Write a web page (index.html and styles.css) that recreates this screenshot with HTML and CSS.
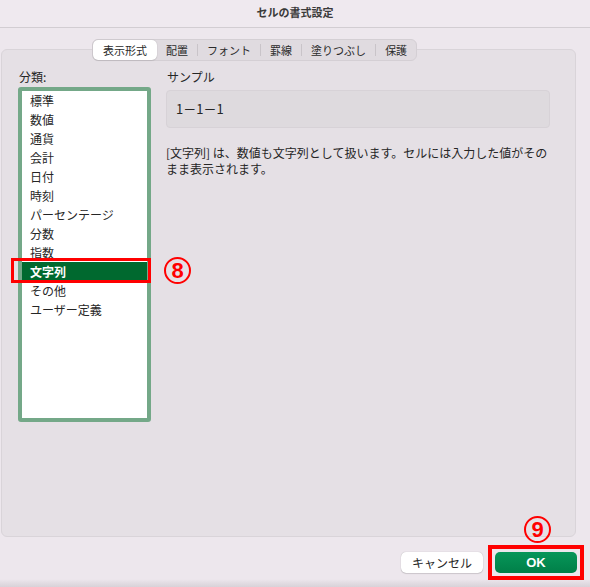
FILE: index.html
```html
<!DOCTYPE html>
<html lang="ja">
<head>
    <meta charset="UTF-8">
    <meta name="viewport" content="width=device-width, initial-scale=1.0">
    <title>セルの書式設定</title>
    <link rel="stylesheet" href="styles.css">
</head>
<body>
  <div class="window">
    <div class="titlebar">セルの書式設定</div>

    <div class="main">
      <div class="panel">
        <!-- Tabs -->
        <div class="tabs">
          <span class="tab active">表示形式</span>
          <span class="tab">配置</span>
          <span class="sep"></span>
          <span class="tab">フォント</span>
          <span class="sep"></span>
          <span class="tab">罫線</span>
          <span class="sep"></span>
          <span class="tab">塗りつぶし</span>
          <span class="sep"></span>
          <span class="tab">保護</span>
        </div>

        <div class="content">
          <!-- Category list -->
          <div class="category">
            <div class="label">分類:</div>
            <div class="list-wrap">
              <ul class="list">
                <li>標準</li>
                <li>数値</li>
                <li>通貨</li>
                <li>会計</li>
                <li>日付</li>
                <li>時刻</li>
                <li>パーセンテージ</li>
                <li>分数</li>
                <li>指数</li>
                <li class="selected">文字列</li>
                <li>その他</li>
                <li>ユーザー定義</li>
              </ul>
              <div class="mark-box"></div>
              <span class="step step-8">8</span>
            </div>
          </div>

          <!-- Sample -->
          <div class="sample">
            <div class="label">サンプル</div>
            <div class="sample-box">1－1－1</div>
            <p class="desc">[文字列] は、数値も文字列として扱います。セルには入力した値がその<br>まま表示されます。</p>
          </div>
        </div>
      </div>

      <!-- Buttons -->
      <div class="footer">
        <button class="btn cancel">キャンセル</button>
        <span class="ok-mark">
          <button class="btn ok">OK</button>
          <span class="step step-9">9</span>
        </span>
      </div>
    </div>
  </div>
</body>
</html>
```

FILE: styles.css
```css
body {
    margin: 0;
    font-family: "Noto Sans CJK JP", "Noto Sans", sans-serif;
    color: #262626;
    background-color: #ede7ed;
}

.window {
    width: 590px;
    height: 587px;
    overflow: hidden;
    background: linear-gradient(to bottom, #ede7ed 579px, #d8d2d8 587px);
}

.titlebar {
    height: 27px;
    line-height: 25px;
    text-align: center;
    font-size: 11px;
    font-weight: bold;
    color: #3a3a3a;
    background-color: #efe9ef;
    border-bottom: 1px solid #d2cdd2;
}

.main {
    padding: 21px 0 0 1px;
}

.panel {
    width: 573px;
    height: 486px;
    background-color: #e5e0e5;
    border: 1px solid #d9d4d9;
    border-radius: 6px;
}

/* Tabs */
.tabs {
    display: flex;
    align-items: center;
    width: fit-content;
    height: 20px;
    margin: -11px 0 0 90px;
    background-color: #e0dbe0;
    border: 1px solid #d4cfd4;
    border-radius: 6px;
    font-size: 11px;
}

.tab {
    padding: 0 9px;
    line-height: 20px;
    color: #2a2a2a;
}

.tab.active {
    background-color: #ffffff;
    border-radius: 5px;
    box-shadow: 0 0 1px rgba(0, 0, 0, 0.25), 0 1px 1px rgba(0, 0, 0, 0.08);
    padding: 0 10px;
}

.sep {
    width: 1px;
    height: 12px;
    background-color: #c9c4c9;
}

.content {
    display: flex;
    gap: 15px;
    padding: 8px 25px 0 16px;
}

.label {
    font-size: 12px;
    line-height: 16px;
    padding-left: 1px;
}

/* Category list */
.category {
    width: 133px;
}

.list-wrap {
    position: relative;
    margin-top: 2px;
}

.list {
    list-style: none;
    margin: 0;
    padding: 0;
    height: 327px;
    background-color: #ffffff;
    border: 4px solid #74a888;
    border-radius: 3px;
}

.list li {
    height: 19px;
    line-height: 19px;
    padding-left: 8px;
    font-size: 12px;
    color: #262626;
}

.list li.selected {
    background-color: #00692f;
    color: #ffffff;
    font-weight: bold;
}

.mark-box {
    position: absolute;
    left: -7px;
    top: 171px;
    width: 134px;
    height: 19px;
    border: 3px solid #ff0000;
}

.step {
    position: absolute;
    display: flex;
    align-items: center;
    justify-content: center;
    width: 23px;
    height: 23px;
    border: 2px solid #ff0000;
    border-radius: 50%;
    color: #ff0000;
    font-family: "Liberation Sans", sans-serif;
    font-size: 22px;
    font-weight: bold;
}

.step-8 {
    left: 146px;
    top: 170px;
}

.step-9 {
    left: 32px;
    top: -33px;
}

/* Sample */
.sample {
    flex: 1;
}

.sample-box {
    margin-top: 5px;
    height: 36px;
    line-height: 36px;
    padding-left: 9px;
    font-size: 13px;
    background-color: #dedade;
    border: 1px solid #d7d2d7;
    border-radius: 4px;
}

.desc {
    margin: 17px 0 0;
    font-size: 12px;
    line-height: 16px;
    white-space: nowrap;
}

/* Buttons */
.footer {
    display: flex;
    justify-content: flex-end;
    align-items: center;
    gap: 5px;
    margin-top: 8px;
    padding-right: 6px;
}

.btn {
    height: 21px;
    width: 82px;
    border: none;
    border-radius: 5px;
    font-family: "Noto Sans CJK JP", "Noto Sans", sans-serif;
    font-size: 12px;
    padding: 0;
    cursor: pointer;
}

.cancel {
    background-color: #ffffff;
    color: #262626;
    box-shadow: 0 0 1px rgba(0, 0, 0, 0.3), 0 1px 1px rgba(0, 0, 0, 0.12);
}

.ok-mark {
    position: relative;
    display: flex;
    padding: 3px;
    border: 4px solid #ff0000;
}

.ok {
    background: linear-gradient(to bottom, #079659, #007f48);
    color: #ffffff;
    font-family: "Liberation Sans", sans-serif;
    font-weight: bold;
    font-size: 13px;
}
```
